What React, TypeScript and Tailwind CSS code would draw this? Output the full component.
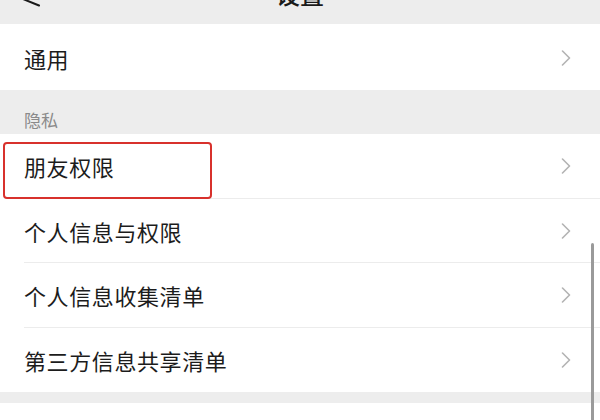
import React from "react";

const Chevron = () => (
  <svg width="10" height="16" viewBox="0 0 10 16" fill="none">
    <polyline points="1.5,1 8.5,8 1.5,15" stroke="#b3b3b3" strokeWidth="1.6" strokeLinecap="round" strokeLinejoin="round" />
  </svg>
);

const Row = ({ label, divider, h, children }: { label: string; divider?: boolean; h: string; children?: React.ReactNode }) => (
  <div className={`relative bg-white pl-[24px] flex ${h}`}>
    <div className={`flex-1 flex items-center justify-between pr-[29px] ${divider ? "border-b border-[#ececec]" : ""}`}>
      <span className="text-[22px] leading-none tracking-[0.6px] text-[#1c1c1c]">{label}</span>
      <Chevron />
    </div>
    {children}
  </div>
);

export default function App() {
  return (
    <div
      className="relative w-[600px] h-[420px] overflow-hidden bg-[#ededed]"
      style={{ fontFamily: '"Noto Sans CJK SC", "Noto Sans", sans-serif' }}
    >
      <div className="h-[24px] flex items-end bg-[#ededed] overflow-hidden">
        <svg width="40" height="24" viewBox="0 0 40 24" className="shrink-0 overflow-visible">
          <polyline points="30,-16 23,-1 39,5.5" stroke="#1a1a1a" strokeWidth="2" fill="none" strokeLinecap="round" strokeLinejoin="round" />
        </svg>
        <div className="flex-1 flex justify-center mb-[18px]">
          <span className="text-[24px] leading-[24px] text-[#1a1a1a] font-medium">设置</span>
        </div>
        <div className="w-[40px] shrink-0" />
      </div>

      <div className="bg-white h-[66px] pl-[24px] pr-[29px] pt-[1px] flex items-center justify-between">
        <span className="text-[22px] leading-none tracking-[0.6px] text-[#1c1c1c]">通用</span>
        <Chevron />
      </div>

      <div className="h-[44px] pl-[24px] pt-[14px] flex items-center">
        <span className="text-[17px] leading-none text-[#8a8a8a]">隐私</span>
      </div>

      <Row label="朋友权限" divider h="h-[65px]">
        <div className="absolute left-[3px] top-[8px] w-[209px] h-[57px] border-2 border-[#d8312c] rounded-[4px]" />
      </Row>
      <Row label="个人信息与权限" divider h="h-[64px]" />
      <Row label="个人信息收集清单" divider h="h-[65px]" />
      <Row label="第三方信息共享清单" h="h-[64px]" />

      <div className="h-[11px] bg-[#ededed]" />
      <div className="h-[17px] bg-white" />

      <div className="absolute left-[591px] top-[243px] w-[3px] h-[190px] rounded-full bg-[#9a9a9a]" />
    </div>
  );
}
